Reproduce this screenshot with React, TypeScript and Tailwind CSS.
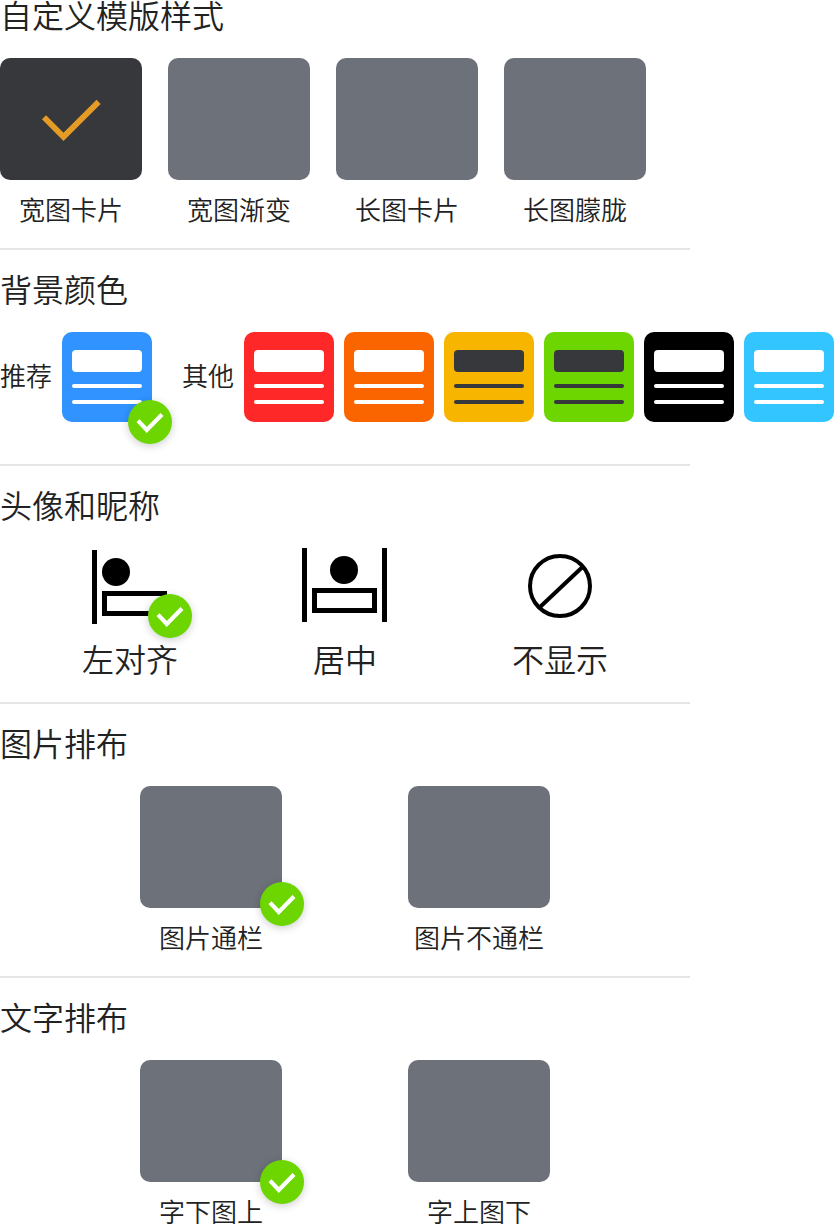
import { useState, type ReactNode } from "react";

type Option = { value: string; label: string };

const TEMPLATE_STYLES: Option[] = [
  { value: "wide-card", label: "宽图卡片" },
  { value: "wide-gradient", label: "宽图渐变" },
  { value: "tall-card", label: "长图卡片" },
  { value: "tall-blur", label: "长图朦胧" },
];

const IMAGE_LAYOUTS: Option[] = [
  { value: "full", label: "图片通栏" },
  { value: "inset", label: "图片不通栏" },
];

const TEXT_LAYOUTS: Option[] = [
  { value: "below", label: "字下图上" },
  { value: "above", label: "字上图下" },
];

const OTHER_COLORS = [
  { value: "red", name: "红色", bg: "bg-[#ff2828]", ink: "bg-white" },
  { value: "orange", name: "橙色", bg: "bg-[#fb6500]", ink: "bg-white" },
  { value: "yellow", name: "黄色", bg: "bg-[#f8b500]", ink: "bg-[#37383c]" },
  { value: "green", name: "绿色", bg: "bg-[#6dd500]", ink: "bg-[#37383c]" },
  { value: "black", name: "黑色", bg: "bg-black", ink: "bg-white" },
  { value: "cyan", name: "青色", bg: "bg-[#33c5ff]", ink: "bg-white" },
];

function Section({ title, children }: { title: string; children: ReactNode }) {
  return (
    <fieldset className="w-full min-w-0 max-w-[690px] border-b-2 border-[#e5e5e5] pt-6 pb-[26px] first:pt-0 last:border-b-0 last:pb-0">
      <legend className="float-left mb-[30px] w-full text-[32px] leading-[28px]">{title}</legend>
      <div className="clear-both">{children}</div>
    </fieldset>
  );
}

function Badge({ place }: { place: string }) {
  return (
    <span className={`absolute size-11 rounded-full bg-[#6dd500] shadow-[0_2px_8px_rgba(0,0,0,0.2)] ${place}`}>
      <svg viewBox="0 0 44 44" className="size-11" fill="none" aria-hidden="true">
        <path d="M10 20.6 18.8 30 34 14.6" stroke="#fff" strokeWidth="4.2" />
      </svg>
    </span>
  );
}

type RadioProps = {
  group: string;
  value: string;
  checked: boolean;
  onPick: (value: string) => void;
};

function Radio({ group, value, checked, onPick, name }: RadioProps & { name?: string }) {
  return (
    <input
      type="radio"
      name={group}
      value={value}
      checked={checked}
      aria-label={name}
      onChange={() => onPick(value)}
      className="sr-only"
    />
  );
}

function TemplateCard({ label, ...radio }: RadioProps & { label: string }) {
  return (
    <label className="relative flex cursor-pointer flex-col items-center gap-4">
      <Radio {...radio} />
      <span className={`block h-[122px] w-[142px] rounded-[10px] ${radio.checked ? "bg-[#37383c]" : "bg-[#6d7179]"}`}>
        {radio.checked && (
          <svg viewBox="0 0 142 122" className="h-full w-full" fill="none" aria-hidden="true">
            <path d="M44 59.3 63.5 78.8 98.6 43.9" stroke="#e49c27" strokeWidth="5.8" />
          </svg>
        )}
      </span>
      <span className="text-[26px] leading-[26px]">{label}</span>
    </label>
  );
}

function LayoutCard({ label, badge, ...radio }: RadioProps & { label: string; badge: string }) {
  return (
    <label className="relative flex cursor-pointer flex-col items-center gap-4">
      <Radio {...radio} />
      <span className="relative block h-[122px] w-[142px] rounded-[10px] bg-[#6d7179]">
        {radio.checked && <Badge place={badge} />}
      </span>
      <span className="text-[26px] leading-[26px]">{label}</span>
    </label>
  );
}

function Swatch({ name, bg, ink, ...radio }: RadioProps & { name: string; bg: string; ink: string }) {
  return (
    <label className={`relative flex size-[90px] shrink-0 cursor-pointer flex-col gap-3 rounded-[10px] px-[10px] pt-[18px] ${bg}`}>
      <Radio {...radio} name={name} />
      <span className={`h-[22px] rounded ${ink}`} />
      <span className={`h-1 rounded-full ${ink}`} />
      <span className={`h-1 rounded-full ${ink}`} />
      {radio.checked && <Badge place="-right-5 -bottom-[22px]" />}
    </label>
  );
}

function AvatarOption({ label, children, ...radio }: RadioProps & { label: string; children: ReactNode }) {
  return (
    <label className="relative flex cursor-pointer flex-col items-center gap-5">
      <Radio {...radio} />
      <span className="relative block">
        <svg viewBox="0 0 96 76" className="h-[76px] w-24" fill="none" stroke="#000" aria-hidden="true">
          {children}
        </svg>
        {radio.checked && <Badge place="-right-[14px] -bottom-[14px]" />}
      </span>
      <span className="text-[32px] leading-[28px]">{label}</span>
    </label>
  );
}

export default function App() {
  const [template, setTemplate] = useState("wide-card");
  const [color, setColor] = useState("blue");
  const [avatar, setAvatar] = useState("left");
  const [image, setImage] = useState("full");
  const [text, setText] = useState("below");

  return (
    <form lang="zh-CN" className="bg-white font-['Noto_Sans_CJK_SC',sans-serif] font-[350] text-[#222]">
      <Section title="自定义模版样式">
        <div className="flex gap-[26px]">
          {TEMPLATE_STYLES.map((o) => (
            <TemplateCard key={o.value} group="template" value={o.value} label={o.label} checked={template === o.value} onPick={setTemplate} />
          ))}
        </div>
      </Section>

      <Section title="背景颜色">
        <div className="mb-4 flex items-center gap-[30px] text-[26px] leading-[26px]">
          <div className="flex shrink-0 items-center gap-[10px]">
            <span className="pb-1">推荐</span>
            <Swatch group="color" value="blue" name="蓝色" bg="bg-[#3093ff]" ink="bg-white" checked={color === "blue"} onPick={setColor} />
          </div>
          <div className="flex shrink-0 items-center gap-[10px]">
            <span className="pb-1">其他</span>
            {OTHER_COLORS.map((c) => (
              <Swatch key={c.value} group="color" value={c.value} name={c.name} bg={c.bg} ink={c.ink} checked={color === c.value} onPick={setColor} />
            ))}
          </div>
        </div>
      </Section>

      <Section title="头像和昵称">
        <div className="mb-1 flex justify-between px-[82px]">
          <AvatarOption group="avatar" value="left" label="左对齐" checked={avatar === "left"} onPick={setAvatar}>
            <path d="M12.5 2V76" strokeWidth="5" />
            <circle cx="34" cy="24" r="14" fill="#000" stroke="none" />
            <rect x="22.5" y="45.5" width="60" height="20" strokeWidth="5" />
          </AvatarOption>
          <AvatarOption group="avatar" value="center" label="居中" checked={avatar === "center"} onPick={setAvatar}>
            <path d="M7.5 0V74M87.5 0V74" strokeWidth="5" />
            <circle cx="47" cy="22" r="14" fill="#000" stroke="none" />
            <rect x="17.5" y="42.5" width="60" height="20" strokeWidth="5" />
          </AvatarOption>
          <AvatarOption group="avatar" value="hidden" label="不显示" checked={avatar === "hidden"} onPick={setAvatar}>
            <circle cx="48" cy="38" r="30" strokeWidth="4" />
            <path d="M27.5 59.5 71 18.5" strokeWidth="4" />
          </AvatarOption>
        </div>
      </Section>

      <Section title="图片排布">
        <div className="flex justify-center gap-[126px]">
          {IMAGE_LAYOUTS.map((o) => (
            <LayoutCard key={o.value} group="image" value={o.value} label={o.label} badge="-right-[22px] -bottom-[18px]" checked={image === o.value} onPick={setImage} />
          ))}
        </div>
      </Section>

      <Section title="文字排布">
        <div className="flex justify-center gap-[126px]">
          {TEXT_LAYOUTS.map((o) => (
            <LayoutCard key={o.value} group="text" value={o.value} label={o.label} badge="-right-[22px] -bottom-[22px]" checked={text === o.value} onPick={setText} />
          ))}
        </div>
      </Section>
    </form>
  );
}
